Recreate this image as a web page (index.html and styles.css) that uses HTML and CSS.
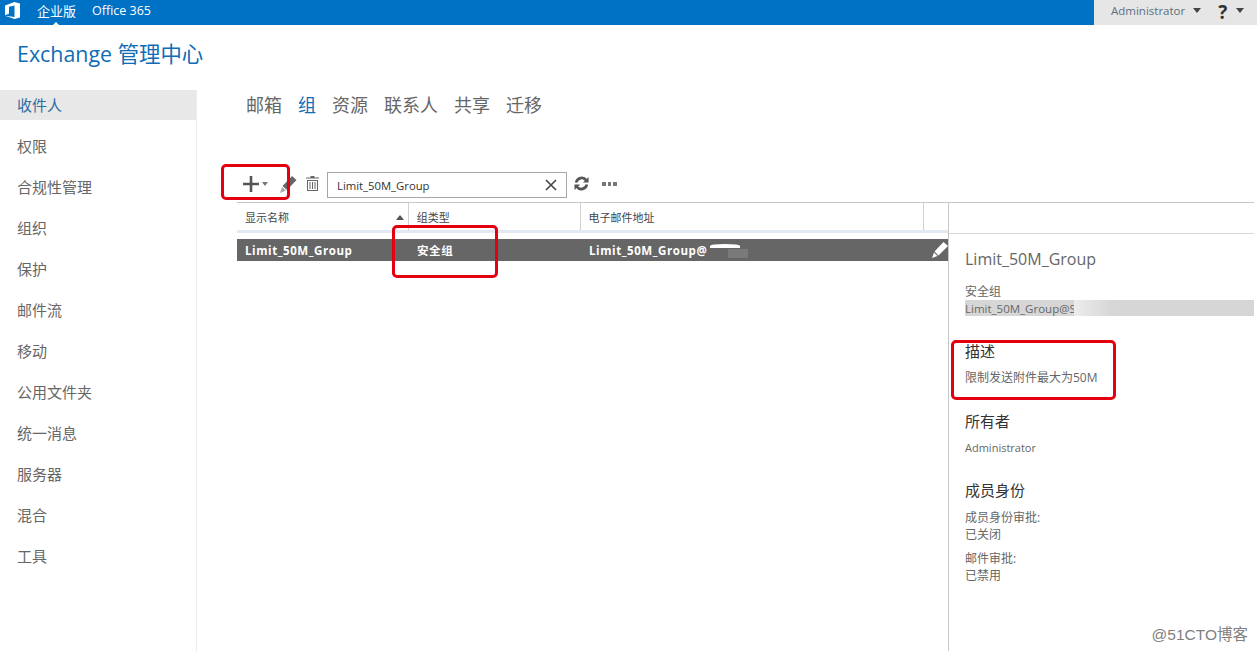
FILE: index.html
```html
<!DOCTYPE html>
<html lang="zh-CN">
<head>
  <meta charset="UTF-8" />
  <title>Exchange 管理中心</title>
  <link rel="stylesheet" href="styles.css">
</head>
<body>
  <header class="topbar">
    <div class="topbar-left">
      <svg class="logo" width="15" height="17" viewBox="0 0 15 17"><path fill="#fff" d="M0 3.400 9.500 0 15 1.500v14L9.500 17 0 13.800l9.500 1.200V3.500L4 4.800v7L0 13.200z"/></svg>
      <a class="topbar-link current" href="#">企业版</a>
      <a class="topbar-link" href="#">Office 365</a>
    </div>
    <div class="topbar-right">
      <span class="admin">Administrator</span>
      <span class="caret"></span>
      <span class="help">?</span>
      <span class="caret"></span>
    </div>
  </header>

  <h1 class="page-title">Exchange 管理中心</h1>

  <div class="layout">
    <nav class="sidebar">
      <a class="nav-item active" href="#">收件人</a>
      <a class="nav-item" href="#">权限</a>
      <a class="nav-item" href="#">合规性管理</a>
      <a class="nav-item" href="#">组织</a>
      <a class="nav-item" href="#">保护</a>
      <a class="nav-item" href="#">邮件流</a>
      <a class="nav-item" href="#">移动</a>
      <a class="nav-item" href="#">公用文件夹</a>
      <a class="nav-item" href="#">统一消息</a>
      <a class="nav-item" href="#">服务器</a>
      <a class="nav-item" href="#">混合</a>
      <a class="nav-item" href="#">工具</a>
    </nav>

    <main class="content">
      <div class="tabs">
        <a href="#">邮箱</a>
        <a class="selected" href="#">组</a>
        <a href="#">资源</a>
        <a href="#">联系人</a>
        <a href="#">共享</a>
        <a href="#">迁移</a>
      </div>

      <div class="toolbar">
        <svg class="tool icon-plus" width="16" height="16" viewBox="0 0 16 16"><path fill="#555" d="M6.700 0h2.600v6.700H16v2.600H9.300V16H6.700V9.300H0V6.700h6.700z"/></svg>
        <span class="tool caret small"></span>
        <svg class="tool icon-edit" width="17" height="18" viewBox="0 0 17 18"><path fill="#666" d="M12 1l4.500 4L7 15l-4.500-4z"/><path fill="#aaa" d="M2 12l4 3.500L0 18z"/></svg>
        <svg class="tool icon-trash" width="13" height="15" viewBox="0 0 13 15"><path fill="#666" d="M4.500 0h4v1.500H13v1H0v-1h4.500zM1 4h11v11H1zm1 1v9h9V5zm1.500 1h1v7h-1zm2.500 0h1v7H6zm2.500 0h1v7h-1z"/></svg>
        <div class="search">
          <span>Limit_50M_Group</span>
          <svg width="12" height="12" viewBox="0 0 12 12"><path stroke="#444" stroke-width="1.600" d="M1 1l10 10M11 1 1 11"/></svg>
        </div>
        <svg class="tool icon-refresh" width="15" height="15" viewBox="0 0 16 16"><path fill="none" stroke="#555" stroke-width="2.800" d="M2.300 7A6 6 0 0 1 13 4.500M13.700 9A6 6 0 0 1 3 11.500"/><path fill="#555" d="M15.500 1v6h-6zM.5 15V9h6z"/></svg>
        <span class="dots"><i></i><i></i><i></i></span>
      </div>

      <div class="split">
        <section class="list">
          <div class="list-head">
            <div class="col col-name">显示名称<span class="sort"></span></div>
            <div class="col col-type">组类型</div>
            <div class="col col-mail">电子邮件地址</div>
            <div class="col col-end"></div>
          </div>
          <div class="list-row">
            <div class="cell cell-name">Limit_50M_Group</div>
            <div class="cell cell-type">安全组</div>
            <div class="cell cell-mail">Limit_50M_Group@<span class="mask-white"></span><span class="mask-grey"></span></div>
            <svg class="row-edit" width="16" height="16" viewBox="0 0 16 16"><path fill="#fff" d="M11.500 0 16 4 6.500 13.500 2.500 9.500z"/><path fill="#fff" d="M2 10.500l3.500 3.500L0 16z"/></svg>
          </div>
        </section>

        <aside class="details">
          <h2 class="details-title">Limit_50M_Group</h2>
          <p class="details-line">安全组</p>
          <p class="details-mail">Limit_50M_Group@S<span class="mail-fade"></span></p>

          <h3>描述</h3>
          <p class="details-line">限制发送附件最大为50M</p>

          <h3>所有者</h3>
          <p class="details-line latin">Administrator</p>

          <h3 class="members">成员身份</h3>
          <p class="details-line">成员身份审批:</p>
          <p class="details-line">已关闭</p>
          <p class="details-line gap">邮件审批:</p>
          <p class="details-line">已禁用</p>
        </aside>
      </div>
    </main>
  </div>

  <div class="mark mark-add"></div>
  <div class="mark mark-type"></div>
  <div class="mark mark-desc"></div>
  <div class="watermark">@51CTO博客</div>
</body>
</html>
```

FILE: styles.css
```css
* {
  margin: 0;
  padding: 0;
  box-sizing: border-box;
  font-family: "Open Sans", "Noto Sans CJK SC", sans-serif;
}

html, body {
  height: 651px;
  overflow: hidden;
}

body {
  background-color: white;
  color: #333;
  position: relative;
}

a {
  color: inherit;
  text-decoration: none;
}

.topbar {
  height: 25px;
  display: flex;
  justify-content: space-between;
  background-color: #0072c6;
}

.topbar-left {
  display: flex;
  align-items: center;
  padding: 0 0 4px 5px;
}

.logo {
  margin-right: 17px;
}

.topbar-link {
  color: white;
  font-size: 12.500px;
  margin-right: 16px;
  line-height: 20px;
}

.topbar-link.current {
  position: relative;
  font-size: 13px;
}

.topbar-link.current::after {
  content: "";
  position: absolute;
  left: 15px;
  bottom: -5px;
  border: 4px solid transparent;
  border-top: 0;
  border-bottom-color: white;
}

.topbar-right {
  width: 163px;
  display: flex;
  align-items: center;
  padding: 0 0 5px 17px;
  background-color: #e6e6e6;
}

.admin {
  font-size: 11.500px;
  color: #5b6f80;
  margin-right: 8px;
}

.caret {
  width: 0;
  height: 0;
  border: 4px solid transparent;
  border-bottom: 0;
  border-top: 5px solid #444;
}

.caret.small {
  border-width: 3px;
  border-bottom: 0;
  border-top: 4px solid #777;
  margin-left: 3px;
}

.help {
  font-size: 19px;
  font-weight: 700;
  color: #333;
  margin: 3px 9px 0 17px;
  line-height: 20px;
}

.page-title {
  font-size: 21.400px;
  font-weight: 400;
  color: #0f6cb5;
  height: 65px;
  padding: 13px 0 0 17px;
  line-height: 32px;
}

.layout {
  display: flex;
  height: 561px;
}

.sidebar {
  width: 197px;
  flex: none;
  border-right: 1px solid #ececec;
  display: flex;
  flex-direction: column;
  gap: 11px;
}

.nav-item {
  height: 30px;
  line-height: 30px;
  padding-left: 17px;
  font-size: 15px;
  color: #666;
}

.nav-item.active {
  background-color: #e8e8e8;
  color: #2f6da3;
}

.content {
  flex: 1;
  min-width: 0;
  display: flex;
  flex-direction: column;
}

.tabs {
  height: 30px;
  display: flex;
  align-items: center;
  gap: 16px;
  padding: 0 0 2px 49px;
  font-size: 18px;
  color: #666;
}

.tabs .selected {
  color: #0f6cb5;
}

.toolbar {
  height: 56px;
  margin-top: 26px;
  padding: 26px 0 4px 46px;
  display: flex;
  align-items: center;
}

.tool {
  margin-bottom: 3px;
}

.icon-edit {
  margin-left: 12px;
}

.icon-trash {
  margin-left: 9px;
}

.search {
  width: 240px;
  height: 26px;
  margin-left: 8px;
  padding: 0 9px;
  border: 1px solid #a6a6a6;
  display: flex;
  justify-content: space-between;
  align-items: center;
  font-size: 11.300px;
  color: #333;
}

.icon-refresh {
  margin-left: 7px;
}

.dots {
  display: flex;
  gap: 2px;
  margin: 0 0 2px 13px;
}

.dots i {
  width: 3.500px;
  height: 3.500px;
  background-color: #777;
}

.split {
  flex: 1;
  display: flex;
  min-height: 0;
}

.list {
  width: 752px;
  flex: none;
  border-right: 1px solid #c8c8c8;
}

.list-head {
  height: 31px;
  margin-left: 40px;
  display: flex;
  border-top: 1px solid #c8c8c8;
  border-bottom: 3px solid #e3e9f3;
  font-size: 11px;
  color: #444;
}

.col {
  height: 27px;
  line-height: 29px;
  padding-left: 8px;
  position: relative;
  border-right: 1px solid #d0d0d0;
}

.col-name { width: 172px; }
.col-type { width: 172px; }
.col-mail { width: 344px; }
.col-end { width: 24px; border-right: 0; }

.sort {
  position: absolute;
  right: 4px;
  top: 12px;
  border: 4px solid transparent;
  border-top: 0;
  border-bottom: 5px solid #555;
}

.list-row {
  height: 22px;
  margin: 6px 0 0 40px;
  display: flex;
  align-items: center;
  background-color: #666;
  color: white;
  font-size: 11.500px;
  font-weight: 700;
  letter-spacing: 0.580px;
}

.cell {
  padding-left: 8px;
  white-space: nowrap;
}

.cell-name { width: 172px; }
.cell-type { width: 172px; }
.cell-mail { width: 343px; position: relative; }

.mask-white {
  position: absolute;
  left: 129px;
  top: 1px;
  width: 30px;
  height: 4px;
  background-color: white;
  border-radius: 50% 50% 0 0;
}

.mask-grey {
  position: absolute;
  left: 147px;
  top: 6px;
  width: 20px;
  height: 9px;
  background-color: #7a7a7a;
}

.row-edit {
  margin-left: 8px;
}

.details {
  flex: 1;
  min-width: 0;
  padding-left: 16px;
  margin-right: 3px;
  position: relative;
  border-top: 1px solid #c8c8c8;
  color: #666;
}

.details::before {
  content: "";
  position: absolute;
  left: 0;
  right: 0;
  top: 30px;
  border-top: 1px solid #d8d8d8;
}

.details-title {
  font-size: 16px;
  font-weight: 400;
  line-height: 24px;
  margin-top: 44px;
  color: #666;
}

.details-line {
  font-size: 12px;
  line-height: 17px;
}

.details-line.latin {
  font-size: 11px;
}

.details > .details-title + .details-line {
  margin-top: 12px;
}

.details-mail {
  font-size: 11.500px;
  line-height: 18px;
  height: 16px;
  background-color: #d6d6d6;
  position: relative;
  overflow: hidden;
  color: #666;
}

.mail-fade {
  position: absolute;
  left: 109px;
  top: 0;
  width: 40px;
  height: 16px;
  background: linear-gradient(to right, #ececec, #d6d6d6);
}

.details h3 {
  font-size: 15px;
  font-weight: 400;
  color: #333;
  line-height: 22px;
  margin: 24px 0 7px;
}

.details h3.members {
  margin: 23px 0 8px;
}

.gap {
  margin-top: 7px;
}

.mark {
  position: absolute;
  border: 3px solid #e3000f;
  border-radius: 5px;
}

.mark-add {
  left: 221px;
  top: 164px;
  width: 69px;
  height: 36px;
}

.mark-type {
  left: 392px;
  top: 225px;
  width: 106px;
  height: 53px;
}

.mark-desc {
  left: 951px;
  top: 340px;
  width: 165px;
  height: 60px;
}

.watermark {
  position: absolute;
  right: 9px;
  bottom: 7px;
  font-size: 15.500px;
  color: #808080;
  font-family: "Liberation Sans", "Noto Sans CJK SC", sans-serif;
}
```
